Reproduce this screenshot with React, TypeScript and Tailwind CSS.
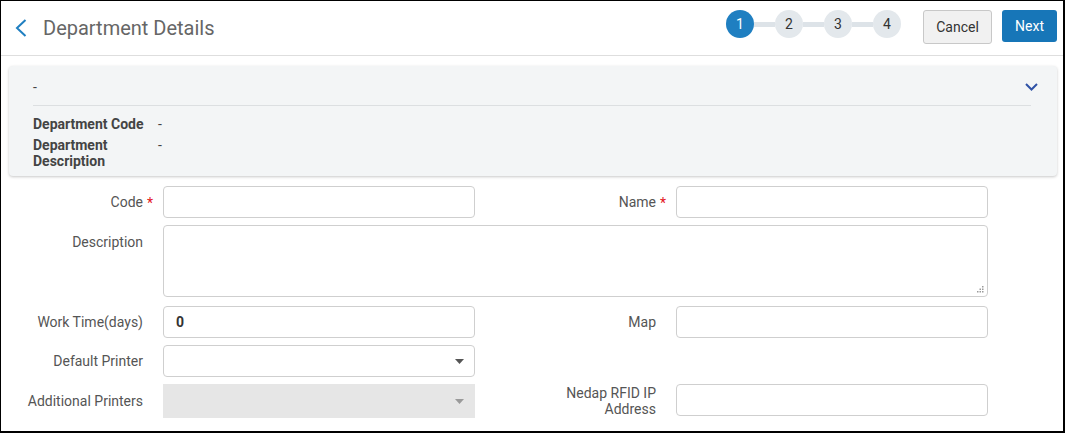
import React from "react";

type LabelProps = {
  children: React.ReactNode;
  required?: boolean;
  className?: string;
};

function FieldLabel({ children, required, className = "" }: LabelProps) {
  return (
    <div className={`pr-5 text-right text-[14px] text-[#555] ${className}`}>
      <span className="relative">
        {children}
        {required && <span className="absolute -right-[10px] -top-[1px] text-[#e3131b]">*</span>}
      </span>
    </div>
  );
}

function TextInput({ value, bold, className = "" }: { value?: string; bold?: boolean; className?: string }) {
  return (
    <input
      type="text"
      defaultValue={value}
      className={`h-[32px] w-full rounded-[4px] border border-[#cfcfcf] bg-white px-3 text-[14px] text-[#333] outline-none ${
        bold ? "font-bold" : ""
      } ${className}`}
    />
  );
}

function Caret({ muted }: { muted?: boolean }) {
  return (
    <svg width="9" height="5" viewBox="0 0 9 5" className={muted ? "text-[#9a9a9a]" : "text-[#555]"}>
      <path d="M0 0h9L4.5 5z" fill="currentColor" />
    </svg>
  );
}

function SelectBox({ disabled }: { disabled?: boolean }) {
  return (
    <div
      className={
        disabled
          ? "flex h-[34px] w-full items-center justify-end bg-[#e6e6e6] pr-[11px]"
          : "flex h-[32px] w-full items-center justify-end rounded-[4px] border border-[#cfcfcf] bg-white pr-[10px]"
      }
    >
      <Caret muted={disabled} />
    </div>
  );
}

function Stepper() {
  const steps = [1, 2, 3, 4];
  return (
    <div className="mt-[9px] flex items-center self-start">
      {steps.map((n, i) => (
        <React.Fragment key={n}>
          {i > 0 && <div className="h-[5px] w-[21px] bg-[#dde3e8]" />}
          <div
            className={`flex h-[28px] w-[28px] items-center justify-center rounded-full text-[14px] ${
              n === 1 ? "bg-[#1f7fc1] text-white" : "bg-[#e3e8ec] text-[#333]"
            }`}
          >
            {n}
          </div>
        </React.Fragment>
      ))}
    </div>
  );
}

export default function App() {
  return (
    <div className="h-[433px] w-[1065px] overflow-hidden border-t border-l border-r-2 border-b-2 border-black bg-white font-['Roboto',sans-serif]">
      {/* header */}
      <div className="flex h-[55px] items-center border-b border-[#dedede] pr-[6px]">
        <button type="button" className="ml-[13px] flex h-[20px] w-[14px] items-center justify-center text-[#1f7fc1]">
          <svg width="12" height="18" viewBox="0 0 12 18" fill="none">
            <path d="M10.5 1L2 9l8.5 8" stroke="currentColor" strokeWidth="2" />
          </svg>
        </button>
        <h1 className="ml-[15px] text-[20px] font-normal text-[#666]">Department Details</h1>
        <div className="flex-1" />
        <Stepper />
        <button
          type="button"
          className="ml-[22px] mt-[9px] h-[34px] w-[69px] self-start rounded-[3px] border border-[#c8c8c8] bg-[#f1f1f1] text-[14px] text-[#333]"
        >
          Cancel
        </button>
        <button
          type="button"
          className="ml-[10px] mt-[9px] h-[32px] w-[55px] self-start rounded-[3px] bg-[#1776b8] text-[14px] text-white"
        >
          Next
        </button>
      </div>

      {/* summary card */}
      <div className="ml-2 mr-[6px] mt-[10px] rounded-[4px] bg-[#f3f5f6] pb-[7px] pl-6 shadow-[0_1px_3px_rgba(0,0,0,0.22)]">
        <div className="flex h-[39px] items-center justify-between pr-[19px] pt-[3px]">
          <span className="text-[14px] text-[#444]">-</span>
          <svg width="13" height="8" viewBox="0 0 13 8" fill="none" className="text-[#2f52a6]">
            <path d="M1 1l5.5 5.5L12 1" stroke="currentColor" strokeWidth="2" />
          </svg>
        </div>
        <div className="mr-[26px] h-px bg-[#dcdfe1]" />
        <div className="mt-[10px] grid grid-cols-[125px_1fr] gap-y-[5px] text-[14px] leading-4 text-[#444]">
          <div className="font-bold">Department Code</div>
          <div>-</div>
          <div className="w-[115px] font-bold">Department Description</div>
          <div>-</div>
        </div>
      </div>

      {/* form */}
      <div className="mt-[10px] grid grid-cols-[162px_312px_201px_312px] items-center gap-y-[7px]">
        <FieldLabel required>Code</FieldLabel>
        <TextInput />
        <FieldLabel required>Name</FieldLabel>
        <TextInput />

        <FieldLabel className="self-start pt-[7px]">Description</FieldLabel>
        <div className="relative col-span-3 mb-[2px]">
          <textarea className="block h-[72px] w-full resize-none rounded-[4px] border border-[#cfcfcf] bg-white px-3 py-2 text-[14px] outline-none" />
          <svg width="7" height="7" viewBox="0 0 7 7" className="absolute bottom-[4px] right-[4px] text-[#9a9a9a]">
            <rect x="5" y="0" width="1.5" height="1.5" fill="currentColor" />
            <rect x="2.5" y="2.5" width="1.5" height="1.5" fill="currentColor" />
            <rect x="5" y="2.5" width="1.5" height="1.5" fill="currentColor" />
            <rect x="0" y="5" width="1.5" height="1.5" fill="currentColor" />
            <rect x="2.5" y="5" width="1.5" height="1.5" fill="currentColor" />
            <rect x="5" y="5" width="1.5" height="1.5" fill="currentColor" />
          </svg>
        </div>

        <FieldLabel>Work Time(days)</FieldLabel>
        <TextInput value="0" bold />
        <FieldLabel>Map</FieldLabel>
        <TextInput />

        <FieldLabel>Default Printer</FieldLabel>
        <SelectBox />
        <div />
        <div />

        <FieldLabel>Additional Printers</FieldLabel>
        <SelectBox disabled />
        <FieldLabel className="leading-4">
          Nedap RFID IP
          <br />
          Address
        </FieldLabel>
        <TextInput className="self-start" />
      </div>
    </div>
  );
}
